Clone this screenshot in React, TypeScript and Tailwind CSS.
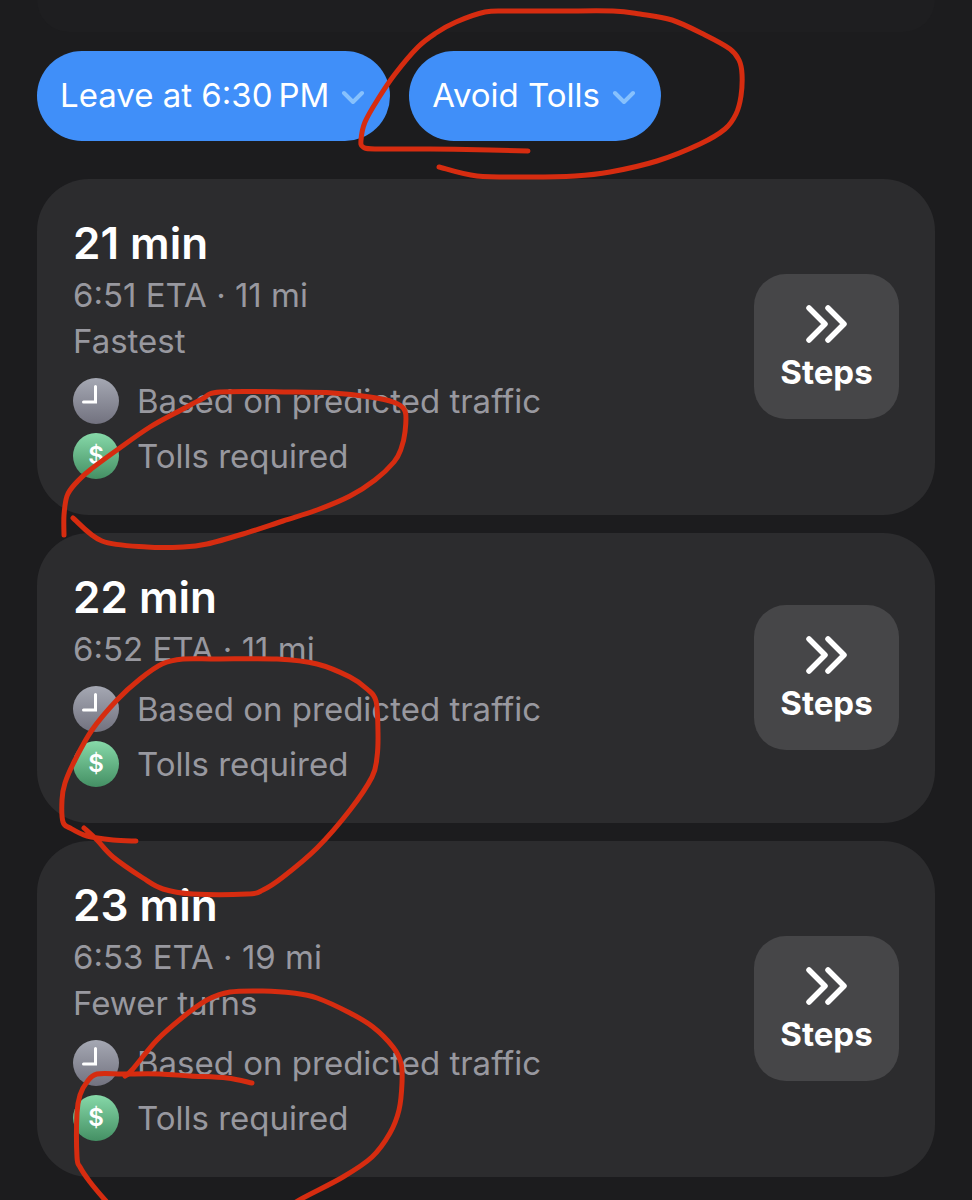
import { clsx } from 'clsx';

type Route = {
  minutes: number;
  eta: string;
  distance: string;
  note?: string;
};

type Point = [number, number];

const routes: Route[] = [
  { minutes: 21, eta: '6:51', distance: '11 mi', note: 'Fastest' },
  { minutes: 22, eta: '6:52', distance: '11 mi' },
  { minutes: 23, eta: '6:53', distance: '19 mi', note: 'Fewer turns' },
];

/* Freehand marker strokes, one list of points per stroke */
const strokes: Point[][] = [
  [
    [528, 151], [490, 150], [430, 149], [375, 149], [363, 147], [361, 140], [365, 122], [378, 99], [395, 74],
    [418, 47], [436, 33], [456, 22], [485, 12], [510, 11], [560, 11], [613, 11], [640, 14], [672, 20],
    [705, 35], [730, 49], [739, 60], [742, 74], [741, 96], [736, 114], [725, 129], [700, 144], [657, 161],
    [610, 172], [575, 176], [530, 177], [477, 176], [439, 167],
  ],
  [
    [64, 535], [64, 515], [67, 496], [75, 484], [90, 470], [117, 450], [150, 427], [183, 409], [202, 399],
    [220, 392], [290, 392], [333, 393], [370, 397], [393, 402], [405, 411], [405, 432], [401, 449],
    [394, 462], [375, 480], [350, 496], [317, 510], [283, 521], [243, 534], [207, 544], [183, 547],
    [147, 547], [102, 541], [73, 518],
  ],
  [
    [136, 841], [113, 840], [87, 836], [70, 828], [63, 822], [62, 800], [65, 783], [75, 760], [92, 730],
    [117, 700], [140, 679], [162, 664], [183, 659], [217, 659], [277, 659], [317, 664], [350, 677],
    [367, 689], [376, 701], [378, 733], [377, 757], [372, 777], [350, 810], [317, 848], [283, 877],
    [263, 890], [247, 894], [193, 894], [163, 889], [143, 878], [113, 857], [97, 840], [84, 828],
  ],
  [
    [125, 1076], [132, 1070], [157, 1040], [183, 1017], [207, 1000], [230, 992], [263, 991], [293, 993],
    [317, 998], [350, 1013], [373, 1027], [393, 1047], [401, 1063], [402, 1083], [399, 1110],
    [390, 1133], [372, 1157], [343, 1177], [303, 1198], [283, 1210],
  ],
  [
    [252, 1083], [227, 1078], [190, 1076], [160, 1074], [123, 1074], [97, 1074], [87, 1082], [80, 1095],
    [77, 1113], [77, 1157], [80, 1167], [90, 1182], [105, 1200], [117, 1213],
  ],
];

/* Catmull-Rom spline through the points, written as cubic beziers */
function toPath(points: Point[]): string {
  let d = `M${points[0][0]} ${points[0][1]}`;
  for (let i = 0; i < points.length - 1; i++) {
    const p0 = points[i - 1] ?? points[i];
    const p1 = points[i];
    const p2 = points[i + 1];
    const p3 = points[i + 2] ?? p2;
    const c1 = [p1[0] + (p2[0] - p0[0]) / 6, p1[1] + (p2[1] - p0[1]) / 6];
    const c2 = [p2[0] - (p3[0] - p1[0]) / 6, p2[1] - (p3[1] - p1[1]) / 6];
    d += `C${c1[0]} ${c1[1]} ${c2[0]} ${c2[1]} ${p2[0]} ${p2[1]}`;
  }
  return d;
}

function MarkerStrokes() {
  return (
    <svg
      className="pointer-events-none absolute top-0 left-0 h-[1200px] w-[972px]"
      viewBox="0 0 972 1200"
      fill="none"
      stroke="#d62c10"
      strokeWidth="5"
      strokeLinecap="round"
      strokeLinejoin="round"
      aria-hidden="true"
    >
      {strokes.map((points, i) => (
        <path key={i} d={toPath(points)} />
      ))}
    </svg>
  );
}

function FilterChip({ label }: { label: string }) {
  return (
    <button
      type="button"
      className="flex h-[90px] items-center gap-3 rounded-full bg-[#408ff9] pr-[25px] pl-[23px] text-[33px] whitespace-nowrap text-white"
    >
      {label}
      <svg className="h-4 w-6" viewBox="0 0 24 16" fill="none" aria-hidden="true">
        <path
          d="M3 5 L12 14 L21 5"
          stroke="#87c1fd"
          strokeWidth="4"
          strokeLinecap="round"
          strokeLinejoin="round"
        />
      </svg>
    </button>
  );
}

function ClockIcon() {
  return (
    <svg className="size-[46px] shrink-0" viewBox="0 0 46 46" aria-hidden="true">
      <defs>
        <linearGradient id="clock-fill" x1="0" y1="0" x2="0" y2="1">
          <stop offset="0" stopColor="#a5a8b3" />
          <stop offset="1" stopColor="#72727f" />
        </linearGradient>
      </defs>
      <circle cx="23" cy="23" r="23" fill="url(#clock-fill)" />
      <path
        d="M22.500 8.500 V24 H10.500"
        fill="none"
        stroke="#fff"
        strokeWidth="3"
        strokeLinecap="round"
        strokeLinejoin="miter"
      />
    </svg>
  );
}

function TollBadge() {
  return (
    <span
      className="flex size-[46px] shrink-0 items-center justify-center rounded-full bg-linear-to-b from-[#87d9a9] to-[#449064] text-[24px] leading-none font-semibold text-white"
      aria-hidden="true"
    >
      $
    </span>
  );
}

function StepsButton() {
  return (
    <button
      type="button"
      className="flex size-[145px] shrink-0 flex-col items-center justify-center rounded-[32px] bg-[#464648] pt-0.5 text-white"
    >
      <svg className="h-[40px] w-[44px]" viewBox="0 0 44 40" fill="none" aria-hidden="true">
        <path
          d="M4 4 L20 20 L4 36 M23 4 L39 20 L23 36"
          stroke="currentColor"
          strokeWidth="5.500"
          strokeLinecap="round"
          strokeLinejoin="round"
        />
      </svg>
      <span className="mt-2 text-[33px] leading-[40px] font-bold">Steps</span>
    </button>
  );
}

function RouteCard({ route }: { route: Route }) {
  return (
    <li className="flex items-center justify-between rounded-[52px] bg-[#2c2c2e] px-9 pt-[35px] pb-9">
      <div className="text-[33px] leading-[46px] text-[#98989f]">
        <h2 className="text-[44px] leading-[58px] font-semibold text-white">{route.minutes} min</h2>
        <p>
          {route.eta} ETA · {route.distance}
        </p>
        {route.note && <p>{route.note}</p>}
        <ul className="mt-[14px] flex flex-col gap-[9px]">
          <li className="flex items-center gap-[18px]">
            <ClockIcon />
            Based on predicted traffic
          </li>
          <li className="flex items-center gap-[18px]">
            <TollBadge />
            Tolls required
          </li>
        </ul>
      </div>
      <StepsButton />
    </li>
  );
}

export default function App() {
  return (
    <main
      className={clsx(
        'relative min-h-screen overflow-hidden bg-[#1c1c1e] px-[37px] pb-[22px]',
        "font-['Inter','Liberation_Sans',sans-serif]",
      )}
    >
      {/* Tail end of the search panel that scrolls off the top */}
      <div className="h-8 rounded-b-[52px] bg-[#1e1e20]" />
      <div className="mt-[19px] flex gap-[19px]">
        <FilterChip label={'Leave at 6:30\u202fPM'} />
        <FilterChip label="Avoid Tolls" />
      </div>
      <ul className="mt-[38px] flex flex-col gap-[18px]">
        {routes.map((route) => (
          <RouteCard key={route.minutes} route={route} />
        ))}
      </ul>
      <MarkerStrokes />
    </main>
  );
}
